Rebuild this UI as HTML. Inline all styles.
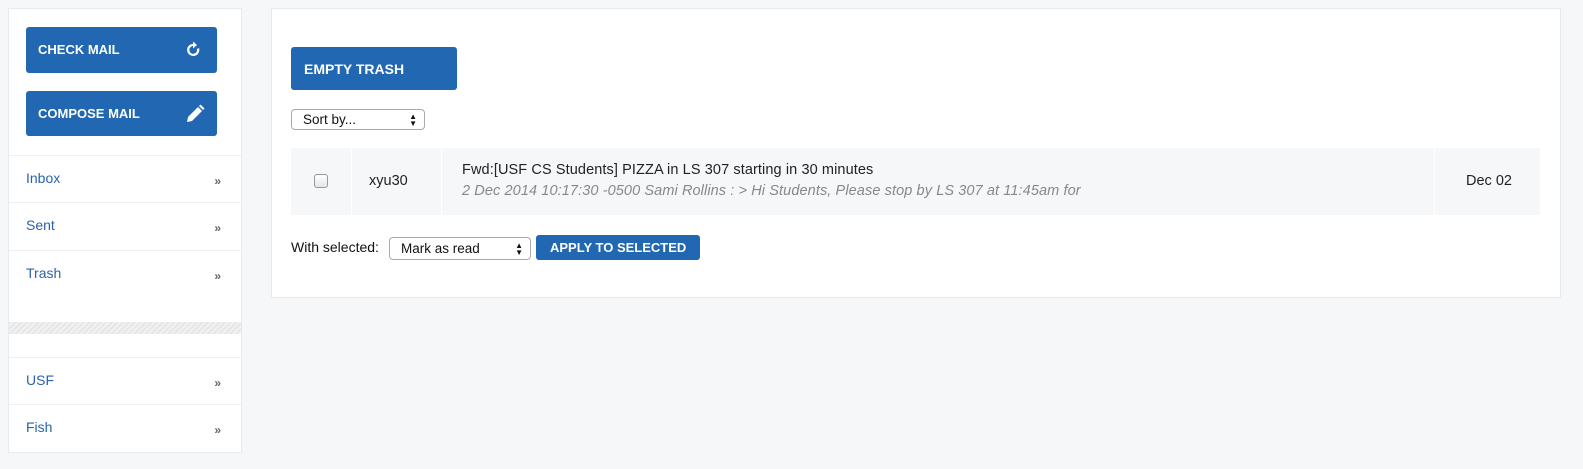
<!DOCTYPE html>
<html><head><style>
*{box-sizing:border-box;margin:0;padding:0}
body{width:1583px;height:469px;background:#f6f7f9;font-family:"Liberation Sans",sans-serif;position:relative;overflow:hidden}
.abs{position:absolute}
.side{left:8px;top:8px;width:234px;height:445px;background:#fff;border:1px solid #e8eaed}
.btn{background:#2167b1;color:#fff;font-weight:bold;border-radius:3px;font-size:13px}
.nav{position:absolute;left:0;width:232px;height:48px;border-top:1px solid #eef0f2;color:#2a63ab;font-size:14px}
.nav span{position:absolute;left:17px;top:14px}
.nav i{position:absolute;right:20px;top:18px;font-style:normal;color:#666;font-size:12px;font-weight:bold}
.main{left:271px;top:8px;width:1290px;height:290px;background:#fff;border:1px solid #e8eaed}
.sel{border:1px solid #aaa;border-radius:4px;background:#fff;font-size:13.5px;color:#111}
.cell{position:absolute;top:0;height:67px;background:#f6f7f9}
</style></head><body>
<div class="abs side">
 <div class="abs btn" style="left:17px;top:18px;width:191px;height:46px"><span class="abs" style="left:12px;top:15px">CHECK MAIL</span>
  <svg class="abs" style="left:160px;top:14px" width="16" height="18" viewBox="0 0 16 18"><path d="M12 7.5A5 5 0 1 1 8 4" fill="none" stroke="#fff" stroke-width="2.2"/><path d="M7 0.5L11 4L7 7.5Z" fill="#fff"/></svg></div>
 <div class="abs btn" style="left:17px;top:82px;width:191px;height:45px"><span class="abs" style="left:12px;top:15px">COMPOSE MAIL</span>
  <svg class="abs" style="left:159px;top:13px" width="20" height="20" viewBox="0 0 20 20"><path d="M2 18l1-5L13 3l4 4L7 17z" fill="#fff"/><path d="M14 2l1.5-1.5 4 4L18 6z" fill="#fff"/></svg></div>
 <div class="nav" style="top:146px"><span>Inbox</span><i>»</i></div>
 <div class="nav" style="top:193px"><span>Sent</span><i>»</i></div>
 <div class="nav" style="top:241px"><span>Trash</span><i>»</i></div>
 <div class="abs" style="left:0;top:313px;width:232px;height:12px;background:repeating-linear-gradient(135deg,#e6e6e6 0 2px,#f2f2f2 2px 4px)"></div>
 <div class="nav" style="top:348px"><span>USF</span><i>»</i></div>
 <div class="nav" style="top:395px"><span>Fish</span><i>»</i></div>
</div>
<div class="abs main">
 <div class="abs btn" style="left:19px;top:38px;width:166px;height:43px;font-size:14px"><span class="abs" style="left:13px;top:14px">EMPTY TRASH</span></div>
 <div class="abs sel" style="left:19px;top:100px;width:134px;height:21px"><span class="abs" style="left:11px;top:2px">Sort by...</span><span class="abs" style="right:7px;top:3px;font-size:8px;line-height:7px">▲<br>▼</span></div>
 <div class="abs" style="left:19px;top:139px;width:1249px;height:68px">
  <div class="cell" style="left:0;width:60px"><div class="abs" style="left:23px;top:26px;width:14px;height:14px;border:1px solid #999;border-radius:3px;background:linear-gradient(#fff,#e6e6e6)"></div></div>
  <div class="cell" style="left:61px;width:89px;font-size:14.5px;color:#222"><span class="abs" style="left:17px;top:25px">xyu30</span></div>
  <div class="cell" style="left:151px;width:992px"><span class="abs" style="left:20px;top:14px;font-size:14.5px;color:#222;letter-spacing:0.1px">Fwd:[USF CS Students] PIZZA in LS 307 starting in 30 minutes</span><span class="abs" style="left:20px;top:35px;font-size:14.5px;color:#888;font-style:italic;letter-spacing:0.1px">2 Dec 2014 10:17:30 -0500 Sami Rollins : &gt; Hi Students, Please stop by LS 307 at 11:45am for</span></div>
  <div class="cell" style="left:1144px;width:105px;font-size:14.5px;color:#222"><span class="abs" style="left:31px;top:25px">Dec 02</span></div>
 </div>
 <span class="abs" style="left:19px;top:230px;font-size:14px;color:#111">With selected:</span>
 <div class="abs sel" style="left:117px;top:228px;width:142px;height:23px"><span class="abs" style="left:11px;top:3px">Mark as read</span><span class="abs" style="right:7px;top:4px;font-size:8px;line-height:7px">▲<br>▼</span></div>
 <div class="abs btn" style="left:264px;top:226px;width:164px;height:25px;font-size:13px"><span class="abs" style="left:14px;top:5px">APPLY TO SELECTED</span></div>
</div>
</body></html>
